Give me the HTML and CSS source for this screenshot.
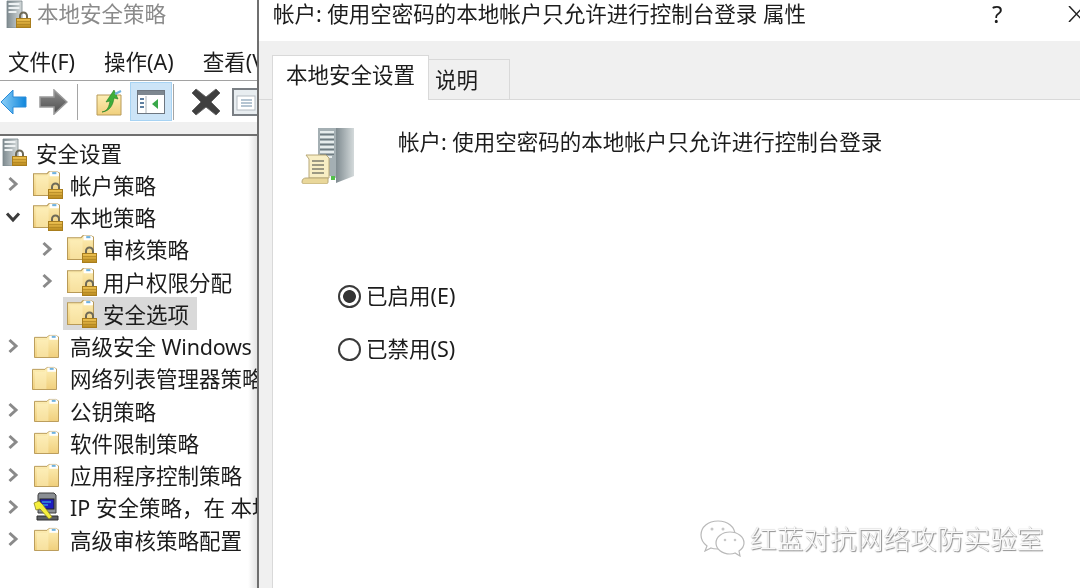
FILE: index.html
```html
<!DOCTYPE html>
<html lang="zh-CN">
<head>
<meta charset="utf-8">
<title>本地安全策略</title>
<link rel="stylesheet" href="styles.css">
</head>
<body>
<svg class="defs" aria-hidden="true">
  <defs>
    <linearGradient id="fold" x1="0" y1="0" x2="0" y2="1"><stop offset="0" stop-color="#fdeeb5"/><stop offset="1" stop-color="#f0cf7c"/></linearGradient>
    <linearGradient id="lock" x1="0" y1="0" x2="0" y2="1"><stop offset="0" stop-color="#f0c454"/><stop offset="1" stop-color="#b98a1e"/></linearGradient>
    <linearGradient id="blue" x1="0" y1="0" x2="1" y2="0"><stop offset="0" stop-color="#8ed0f7"/><stop offset="1" stop-color="#0f86dc"/></linearGradient>
    <linearGradient id="grey" x1="0" y1="0" x2="0" y2="1"><stop offset="0" stop-color="#8c8c8c"/><stop offset="1" stop-color="#4e4e4e"/></linearGradient>
    <linearGradient id="tower" x1="0" y1="0" x2="1" y2="0"><stop offset="0" stop-color="#7f8b90"/><stop offset="1" stop-color="#d4dadb"/></linearGradient>
    <symbol id="folder" viewBox="0 0 26 25">
      <path d="M.5 24.5V3.5h13l2-2h7l3 1.500v21.500z" fill="url(#fold)" stroke="#b89a58"/>
      <path d="M16 1.500h7l2 1.500v3h-9z" fill="#fff"/>
      <rect x="18.500" y="2" width="4" height="2" fill="#6fb2df"/>
      <path d="M3 6h10l2-2v20H3z" fill="#fff3c6" opacity=".45"/>
    </symbol>
    <symbol id="padlock" viewBox="0 0 15 17">
      <path d="M4 8V5a3.500 3.500 0 0 1 7 0v3" fill="none" stroke="#6e6a58" stroke-width="2"/>
      <rect x=".5" y="7.500" width="14" height="9" fill="url(#lock)" stroke="#a87d1d"/>
      <path d="M1 10.500h13M1 13.500h13" stroke="#a87d1d" opacity=".6"/>
    </symbol>
    <symbol id="lockfolder" viewBox="0 0 30 29">
      <use href="#folder" x="0" y="0" width="27" height="26"/>
      <use href="#padlock" x="15" y="12" width="15" height="17"/>
    </symbol>
    <symbol id="serverlock" viewBox="0 0 26 28">
      <path d="M1 1h15v27H1z" fill="url(#tower)" stroke="#7a878c" stroke-width=".8"/>
      <path d="M2.500 4h11M2.500 8h11M2.500 12h8" stroke="#eef2f3" stroke-width="2"/>
      <use href="#padlock" x="10" y="11" width="15" height="17"/>
    </symbol>
    <symbol id="chevr" viewBox="0 0 12 16"><path d="M2.500 2l6.500 6-6.500 6" fill="none" stroke="#8a8a8a" stroke-width="3"/></symbol>
    <symbol id="chevd" viewBox="0 0 16 12"><path d="M2 2.500l6 6.500 6-6.500" fill="none" stroke="#3c3c3c" stroke-width="3"/></symbol>
  </defs>
</svg>
<main class="screen">
  <section class="console">
    <div class="apptitle">
      <svg class="apptitle-icon"><use href="#serverlock"/></svg>
      <span>本地安全策略</span>
    </div>
    <nav class="menu"><span>文件(F)</span><span>操作(A)</span><span>查看(V)</span></nav>
    <div class="toolbar">
      <svg class="tb-back" viewBox="0 0 27 26"><path d="M13 1L1 13l12 12v-7h13V8H13z" fill="url(#blue)" stroke="#2a8bd8"/></svg>
      <svg class="tb-fwd" viewBox="0 0 29 26"><path d="M15 1l13 12-13 12v-7H1V8h14z" fill="url(#grey)" stroke="#9a9a9a" stroke-width="1.500"/></svg>
      <i class="tb-sep"></i>
      <svg class="tb-up" viewBox="0 0 26 28"><path d="M1 27V7h24v20z" fill="url(#fold)" stroke="#b89a58"/><path d="M6 24c6-1 7-6 8-11l-4 1 8-12 4 9-4-1c-1 7-4 13-12 14z" fill="#3fae3a" stroke="#1f7d22" stroke-width=".6"/><path d="M19 6l6-3" stroke="#6fb2df" stroke-width="2"/></svg>
      <span class="tb-active"><svg class="tb-tree" viewBox="0 0 28 24"><rect x=".5" y=".5" width="27" height="23" fill="#fff" stroke="#6d7680"/><path d="M1 1h26v4H1z" fill="#7d8790"/><path d="M9 6v17" stroke="#aab2b8"/><path d="M3 9h4M3 13h4M3 17h4" stroke="#5e7fa0" stroke-width="2"/><path d="M21 9v10l-6-5z" fill="#3aa84a"/></svg></span>
      <i class="tb-sep tb-sep-near"></i>
      <svg class="tb-x" viewBox="0 0 30 28"><path d="M5 1l10 8 10-8 4 4-9 9 9 9-4 4-10-8-10 8-4-4 9-9-9-9z" fill="#3f3f3f" stroke="#666"/></svg>
      <svg class="tb-props" viewBox="0 0 28 28"><rect x="1" y="1" width="26" height="26" fill="#e8edf0" stroke="#7a7f84" stroke-width="2"/><rect x="5" y="8" width="18" height="14" fill="#fff" stroke="#b4bcc2"/><path d="M9 12h11M9 15h11M9 18h11" stroke="#6d8ba5"/></svg>
    </div>
    <div class="strip"></div>
    <ul class="tree">
      <li class="node"><svg class="ico-root"><use href="#serverlock"/></svg><span>安全设置</span></li>
      <li class="node"><svg class="chev"><use href="#chevr"/></svg><svg class="ico-lock"><use href="#lockfolder"/></svg><span>帐户策略</span></li>
      <li class="node"><svg class="chev-open"><use href="#chevd"/></svg><svg class="ico-lock"><use href="#lockfolder"/></svg><span>本地策略</span></li>
      <li class="node sub"><svg class="chev"><use href="#chevr"/></svg><svg class="ico-lock"><use href="#lockfolder"/></svg><span>审核策略</span></li>
      <li class="node sub"><svg class="chev"><use href="#chevr"/></svg><svg class="ico-lock"><use href="#lockfolder"/></svg><span>用户权限分配</span></li>
      <li class="node selected"><div class="sel"><svg class="ico-lock"><use href="#lockfolder"/></svg><span>安全选项</span></div></li>
      <li class="node"><svg class="chev"><use href="#chevr"/></svg><svg class="ico-folder"><use href="#folder"/></svg><span>高级安全 <span class="latin">Windows Defender</span></span></li>
      <li class="node leaf-top"><svg class="ico-folder"><use href="#folder"/></svg><span>网络列表管理器策略</span></li>
      <li class="node"><svg class="chev"><use href="#chevr"/></svg><svg class="ico-folder"><use href="#folder"/></svg><span>公钥策略</span></li>
      <li class="node"><svg class="chev"><use href="#chevr"/></svg><svg class="ico-folder"><use href="#folder"/></svg><span>软件限制策略</span></li>
      <li class="node"><svg class="chev"><use href="#chevr"/></svg><svg class="ico-folder"><use href="#folder"/></svg><span>应用程序控制策略</span></li>
      <li class="node"><svg class="chev"><use href="#chevr"/></svg>
        <svg class="ico-ip" viewBox="0 0 27 29"><path d="M6 1h15l2 2v18H5V3z" fill="#8b8f94" stroke="#3d3d3d"/><rect x="7" y="7" width="14" height="10" fill="#1d1dc0" stroke="#222"/><path d="M9 10h9M9 13h6" stroke="#43d0e0"/><path d="M4 24h21v4H4z" fill="#5c5f63" stroke="#2e2e2e"/><path d="M1 11l5-2 4 4 9 12-3 2-9-10-4 1z" fill="#f5ee3c" stroke="#8a8420" stroke-width=".8"/></svg>
        <span>IP 安全策略，在 本地计算机</span></li>
      <li class="node"><svg class="chev"><use href="#chevr"/></svg><svg class="ico-folder"><use href="#folder"/></svg><span>高级审核策略配置</span></li>
    </ul>
  </section>

  <section class="dialog">
    <header class="dlg-head">
      <span class="dlg-title">帐户: 使用空密码的本地帐户只允许进行控制台登录 属性</span>
      <span class="dlg-help">?</span>
      <svg class="dlg-close" viewBox="0 0 16 16"><path d="M1 0l15 16M16 0L1 16" stroke="#222" stroke-width="1.500" fill="none"/></svg>
    </header>
    <div class="dlg-tabs">
      <div class="tab tab-on">本地安全设置</div>
      <div class="tab tab-off">说明</div>
    </div>
    <div class="dlg-page">
      <div class="policy">
        <svg class="policy-icon" viewBox="0 0 54 58">
          <path d="M17 2h18v50l-18-6z" fill="#a4afb3"/>
          <path d="M35 2h18v48l-18 7z" fill="url(#tower)"/>
          <path d="M19 6h14M19 11h14M19 16h14M19 21h14M19 26h14M19 31h12" stroke="#e6ecec" stroke-width="2"/>
          <path d="M19 8.500h14M19 13.500h14M19 18.500h14M19 23.500h14M19 28.500h14" stroke="#6f7c81" stroke-width="1"/>
          <rect x="30" y="50" width="4" height="4" fill="#53c04a"/>
          <path d="M5 29h20l3 3v20H8V33z" fill="#f8eec4" stroke="#b8a878"/>
          <path d="M11 35h12M11 39h12M11 43h12M11 47h12" stroke="#7d7d6e" stroke-width="1.500"/>
          <path d="M1 56c0-3 2-4 4-4h22v4c0 1-1 2-2 2H3c-1 0-2-1-2-2z" fill="#e9d79a" stroke="#b8a878"/>
        </svg>
        <p class="policy-text">帐户: 使用空密码的本地帐户只允许进行控制台登录</p>
      </div>
      <div class="options">
        <label class="option"><span class="radio radio-on"></span>已启用(E)</label>
        <label class="option"><span class="radio"></span>已禁用(S)</label>
      </div>
    </div>
  </section>

  <div class="watermark">
    <svg class="wm-icon" viewBox="0 0 46 38"><g fill="#fff" stroke="#b9b9b9" stroke-width="1.200"><path d="M19 2C9 2 2 8 2 16c0 4 2 8 6 11l-2 5 6-3c2 1 4 1 7 1 10 0 17-6 17-14S29 2 19 2z"/><path d="M31 13c-8 0-14 5-14 11s6 11 14 11c2 0 3 0 5-1l5 3-1-5c3-2 5-5 5-8 0-6-6-11-14-11z"/></g><g fill="#c8c8c8"><circle cx="13" cy="10" r="1.500"/><circle cx="24" cy="10" r="1.500"/><circle cx="26" cy="21" r="1.300"/><circle cx="36" cy="21" r="1.300"/></g></svg>
    <span class="wm-text">红蓝对抗网络攻防实验室</span>
  </div>
</main>
</body>
</html>
```
FILE: styles.css
```css
* { box-sizing: border-box; }
html, body { margin: 0; padding: 0; background: #fff; }
body {
  width: 1080px;
  height: 588px;
  overflow: hidden;
  font-family: "Noto Sans", "Noto Sans CJK SC", sans-serif;
  font-size: 21.5px;
  color: #1c1c1c;
}
.defs { position: absolute; width: 0; height: 0; }
.screen {
  position: relative;
  display: flex;
  width: 1080px;
  height: 588px;
  overflow: hidden;
  filter: blur(.35px);
}

/* left console */
.console {
  flex: 0 0 259px;
  display: flex;
  flex-direction: column;
  overflow: hidden;
  border-right: 2px solid #6f6f6f;
  background: #fff;
  white-space: nowrap;
}
.apptitle {
  height: 41px;
  flex: none;
  display: flex;
  align-items: flex-start;
  padding-left: 6px;
  color: #8b8b8b;
  line-height: 28px;
}
.apptitle-icon { width: 26px; height: 28px; margin-right: 5px; flex: none; }
.menu {
  height: 40px;
  flex: none;
  display: flex;
  align-items: center;
  gap: 29px;
  padding-left: 8px;
  border-bottom: 1px solid #a2a2a2;
}
.toolbar {
  height: 41px;
  flex: none;
  display: flex;
  align-items: center;
  overflow: hidden;
}
.toolbar svg { flex: none; }
.tb-back { width: 27px; height: 26px; }
.tb-fwd { width: 29px; height: 26px; margin-left: 12px; }
.tb-sep { flex: none; width: 1px; height: 36px; background: #a5a5a5; margin-left: 9px; }
.tb-up { width: 26px; height: 28px; margin-left: 18px; }
.tb-active {
  flex: none;
  display: flex;
  align-items: center;
  justify-content: center;
  width: 42px;
  height: 39px;
  margin-left: 8px;
  background: #cce4f7;
  border: 1px solid #a7d3f3;
}
.tb-tree { width: 28px; height: 24px; }
.tb-sep-near { margin-left: 1px; }
.tb-x { width: 30px; height: 28px; margin-left: 17px; }
.tb-props { width: 28px; height: 28px; margin-left: 11px; }
.strip {
  height: 12px;
  flex: none;
  background: #f0f0f0;
}
.tree {
  list-style: none;
  margin: 0;
  padding: 0;
  border-top: 2px solid #6f6f6f;
  flex: 1;
  overflow: hidden;
  background: linear-gradient(90deg, #fff 0, #fff 248px, #e4e4e4 257px);
}
.node {
  height: 32.250px;
  display: flex;
  align-items: center;
  padding-left: 7px;
}
.node.sub { padding-left: 41px; }
.sub .ico-lock { margin-right: 6px; }
.latin { letter-spacing: -.25px; }
.chev { width: 12px; height: 16px; flex: none; margin-right: 14px; }
.chev-open { width: 16px; height: 12px; flex: none; margin: 0 12px 0 -2px; }
.ico-root { width: 26px; height: 28px; flex: none; margin: 0 8px 0 -5px; }
.ico-lock { width: 30px; height: 29px; flex: none; margin-right: 7px; }
.ico-folder { width: 25px; height: 24px; flex: none; margin: 0 11px 0 1px; }
.ico-ip { width: 27px; height: 29px; flex: none; margin-right: 10px; }
.node.leaf-top { padding-left: 32px; }
.leaf-top .ico-folder { margin: 0 13px 0 0; }
.node.selected { padding-left: 63px; }
.sel {
  display: flex;
  align-items: center;
  width: 134px;
  height: 33px;
  padding-left: 4px;
  background: #d9d9d9;
}
.sel .ico-lock { margin-right: 6px; }

/* right dialog */
.dialog {
  flex: 1;
  display: flex;
  flex-direction: column;
  background: #f0f0f0;
  min-width: 0;
}
.dlg-head {
  height: 41px;
  flex: none;
  display: flex;
  align-items: flex-start;
  padding-left: 14px;
  background: #fff;
  line-height: 28px;
  white-space: nowrap;
}
.dlg-title { flex: 1; }
.dlg-help { width: 76px; font-size: 24px; }
.dlg-close { width: 16px; height: 16px; margin: 6px -4px 0 0; flex: none; }
.dlg-tabs {
  height: 59px;
  flex: none;
  display: flex;
  align-items: flex-end;
  padding-left: 13px;
  border-bottom: 1px solid #d9d9d9;
}
.tab { white-space: nowrap; }
.tab-on {
  width: 157px;
  height: 45px;
  margin-bottom: -1px;
  padding: 2px 0 0 13px;
  background: #fff;
  border: 1px solid #d9d9d9;
  border-bottom: 0;
  position: relative;
}
.tab-off {
  width: 81px;
  height: 40px;
  padding: 3px 0 0 6px;
  border: 1px solid #d9d9d9;
  border-left: 0;
  border-bottom: 0;
}
.dlg-page {
  flex: 1;
  margin-left: 13px;
  background: #fff;
  border-left: 1px solid #d9d9d9;
  display: flex;
  flex-direction: column;
}
.policy {
  display: flex;
  align-items: flex-start;
  padding: 26px 0 0 28px;
}
.policy-icon { width: 54px; height: 58px; flex: none; }
.policy-text { margin: 0 0 0 43px; line-height: 32px; }
.options {
  display: flex;
  flex-direction: column;
  gap: 21px;
  padding: 94px 0 0 65px;
}
.option {
  display: flex;
  align-items: center;
  height: 32px;
  gap: 5px;
}
.radio {
  flex: none;
  width: 23px;
  height: 23px;
  border: 2px solid #3a3a3a;
  border-radius: 50%;
  background: #fff;
  margin-top: 5px;
}
.radio-on { background: radial-gradient(circle, #333 0 6px, #fff 6.800px); }

/* watermark */
.watermark {
  position: absolute;
  left: 699px;
  top: 518px;
  display: flex;
  align-items: center;
  gap: 5px;
}
.wm-icon { width: 46px; height: 38px; flex: none; }
.wm-text {
  font-size: 26.700px;
  font-weight: 300;
  color: #fafafa;
  white-space: nowrap;
  text-shadow: 1px 1px 1px #8a8a8a, 0 0 1px #a8a8a8;
}
```
